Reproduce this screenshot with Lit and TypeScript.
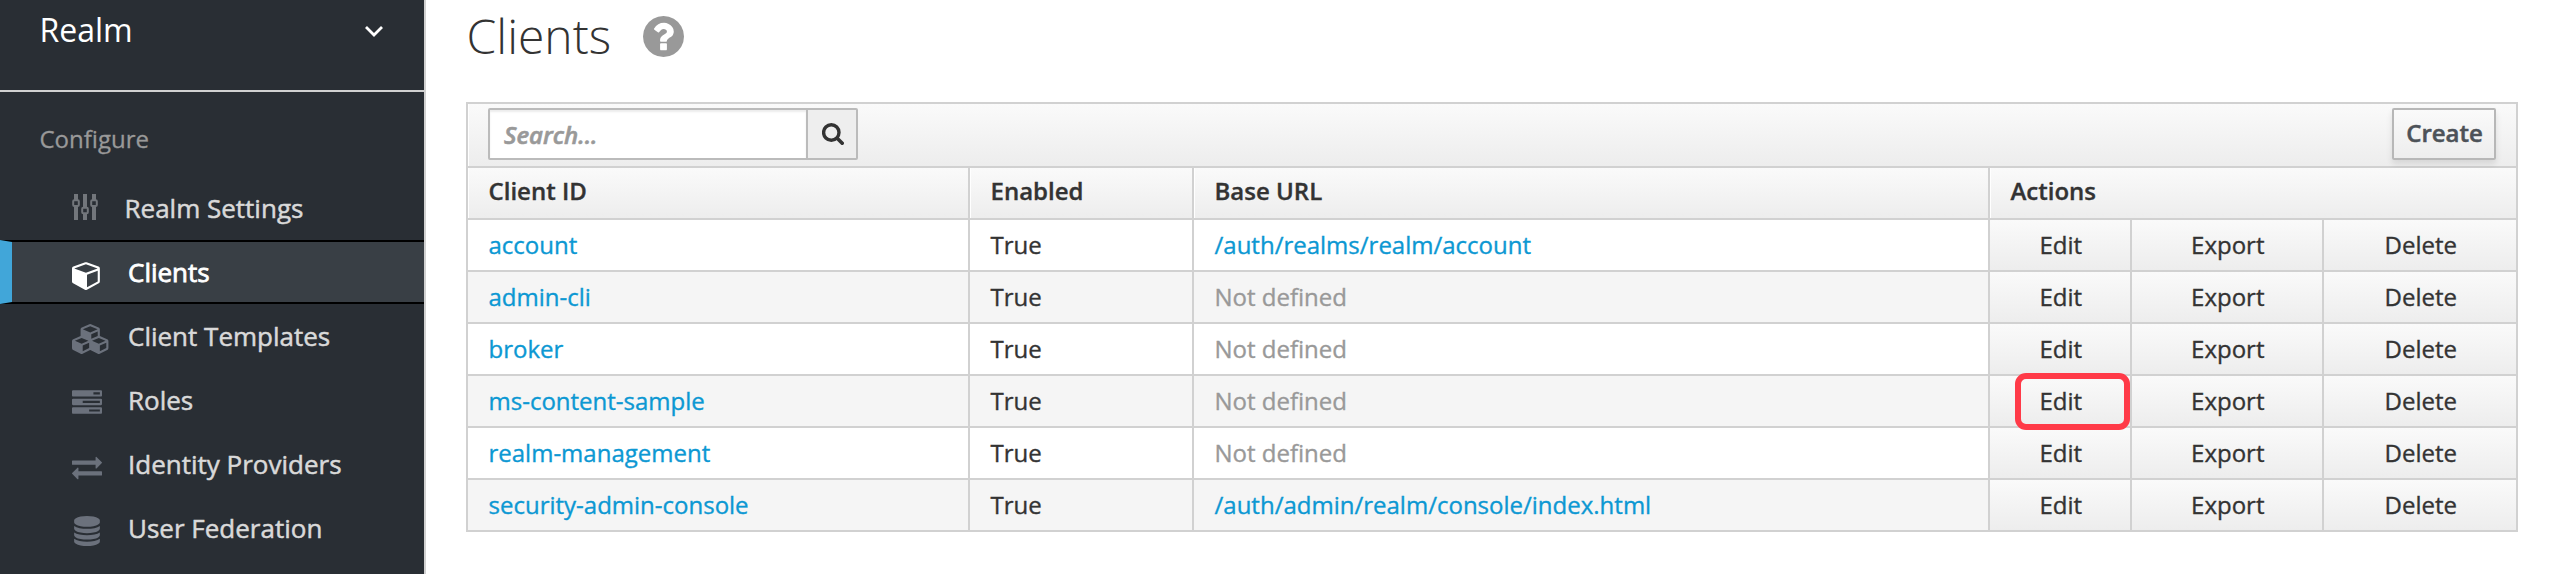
import { LitElement, html, svg, css } from "lit";
import { customElement, property } from "lit/decorators.js";
import { classMap } from "lit/directives/class-map.js";

interface Client { id: string; url?: string; marked?: boolean; }
interface NavItem { label: string; icon: string; active?: boolean; }

const icons: Record<string, unknown> = {
  sliders: svg`<g transform="scale(59.73)" fill="none" stroke="currentColor">
    <path stroke-width="4" d="M4 0V6M4 12V26M13 0V13.500M13 19.500V26M22 0V6M22 12V26"/>
    <path stroke-width="2" d="M1.200 7.300q0-1 1-1h3.600q1 0 1 1v3.600q0 1-1 1h-3.600q-1 0-1-1zM10.200 14.700q0-1 1-1h3.600q1 0 1 1v3.600q0 1-1 1h-3.600q-1 0-1-1zM19.200 7.300q0-1 1-1h3.600q1 0 1 1v3.600q0 1-1 1h-3.600q-1 0-1-1z"/></g>`,
  cube: svg`<path d="M896 1629l640-349v-636l-640 233v752zm-64-865l698-254-698-254-698 254zm832-252v768q0 35-18 65t-49 47l-704 384q-28 16-61 16t-61-16l-704-384q-31-17-49-47t-18-65v-768q0-40 23-73t61-47l704-256q22-8 44-8t44 8l704 256q38 14 61 47t23 73z"/>`,
  cubes: svg`<path d="M640 1632l384-192v-314l-384 164v342zm-64-454l404-173-404-173-404 173zm1088 454l384-192v-314l-384 164v342zm-64-454l404-173-404-173-404 173zm-448-293l384-165v-266l-384 164v267zm-64-379l441-189-441-189-441 189zm1088 518v416q0 36-19 67t-52 47l-448 224q-25 14-57 14t-57-14l-448-224q-4-2-7-4-2 2-7 4l-448 224q-25 14-57 14t-57-14l-448-224q-33-16-52-47t-19-67v-416q0-38 21.500-70t56.500-48l434-186v-400q0-38 21.500-70t56.500-48l448-192q23-10 50-10t50 10l448 192q35 16 56.500 48t21.500 70v400l434 186q36 16 57 48t21 70z"/>`,
  tasks: svg`<path d="M1024 1408h640v-128h-640v128zm-384-512h1024v-128h-1024v128zm640-512h384v-128h-384v128zm512 832v256q0 26-19 45t-45 19h-1664q-26 0-45-19t-19-45v-256q0-26 19-45t45-19h1664q26 0 45 19t19 45zm0-512v256q0 26-19 45t-45 19h-1664q-26 0-45-19t-19-45v-256q0-26 19-45t45-19h1664q26 0 45 19t19 45zm0-512v256q0 26-19 45t-45 19h-1664q-26 0-45-19t-19-45v-256q0-26 19-45t45-19h1664q26 0 45 19t19 45z"/>`,
  exchange: svg`<path d="M1792 1184v192q0 13-9.500 22.500t-22.500 9.500h-1376v192q0 13-9.500 22.500t-22.500 9.500q-12 0-24-10l-319-320q-9-9-9-22 0-14 9-23l320-320q9-9 23-9 13 0 22.500 9.500t9.500 22.500v192h1376q13 0 22.500 9.500t9.500 22.500zm0-544q0 14-9 23l-320 320q-9 9-23 9-13 0-22.500-9.500t-9.500-22.500v-192h-1376q-13 0-22.500-9.500t-9.500-22.500v-192q0-13 9.500-22.500t22.500-9.500h1376v-192q0-14 9-23t23-9q12 0 24 10l319 319q9 9 9 23z"/>`,
  database: svg`<path d="M896 768q237 0 443-43t325-127v170q0 69-103 128t-280 93.500-385 34.500-385-34.500-280-93.500-103-128v-170q119 84 325 127t443 43zm0 768q237 0 443-43t325-127v170q0 69-103 128t-280 93.500-385 34.500-385-34.500-280-93.500-103-128v-170q119 84 325 127t443 43zm0-384q237 0 443-43t325-127v170q0 69-103 128t-280 93.500-385 34.500-385-34.500-280-93.500-103-128v-170q119 84 325 127t443 43zm0-1152q208 0 385 34.500t280 93.500 103 128v128q0 69-103 128t-280 93.500-385 34.500-385-34.500-280-93.500-103-128v-128q0-69 103-128t280-93.500 385-34.500z"/>`,
};

@customElement("side-nav")
class SideNav extends LitElement {
  @property({ attribute: false }) items: NavItem[] = [];

  static styles = css`
    :host { display: flex; flex-direction: column; box-sizing: border-box; width: 426px; height: 574px; flex: none;
      background: #292e34; border-right: 2px solid #d1d1d1; color: #d9d9d9; }
    .realm { box-sizing: border-box; height: 92px; padding: 0 41px 0 39.500px; border-bottom: 2px solid #d1d1d1;
      display: flex; justify-content: space-between; align-items: flex-start; color: #fff; font-size: 32px; line-height: 60px; }
    .chevron { width: 18px; height: 12px; margin-top: 25px; fill: none; stroke: #fff; stroke-width: 2.8; }
    .section { padding: 27px 39.500px 0; height: 57px; line-height: 40px; font-size: 24px; color: #999; -webkit-text-stroke: 0.3px #999; }
    .item { box-sizing: border-box; height: 64px; display: flex; align-items: center; padding-left: 72px; font-size: 26px; }
    .item.active { border: 0 solid #000; border-width: 2px 0 2px 12px; border-left-color: #41a6d9; padding-left: 60px;
      background: #393f45; color: #fff; }
    .icon { width: 30px; height: 30px; margin: 6px 26px 0 0; fill: currentColor; color: #6b717c; overflow: visible; flex: none; }
    .active .icon { color: #fff; }
    .icon.sliders { color: #72767b; margin: 2px 22.500px 0 0; }
    .label { line-height: 40px; -webkit-text-stroke: 0.5px currentColor; }
    .active .label { -webkit-text-stroke-width: 0.8px; }
  `;

  render() {
    return html`
      <div class="realm"><span>Realm</span>
        <svg class="chevron" viewBox="0 0 18 12"><path d="M1 2l8 8 8-8"/></svg></div>
      <div class="section">Configure</div>
      ${this.items.map((i) => html`
        <div class=${classMap({ item: true, active: !!i.active })}>
          <svg class="icon ${i.icon}" viewBox="0 0 1792 1792">${icons[i.icon]}</svg>
          <span class="label">${i.label}</span>
        </div>`)}
    `;
  }
}

@customElement("client-table")
class ClientTable extends LitElement {
  @property({ attribute: false }) clients: Client[] = [];

  static styles = css`
    :host { display: block; box-sizing: border-box; width: 2052px; border: 2px solid #d1d1d1; color: #333; font-size: 24px;
      -webkit-text-stroke: 0.35px currentColor; }
    .toolbar { height: 62px; display: flex; justify-content: space-between; align-items: flex-start; padding: 4px 20px 0;
      box-sizing: border-box; box-shadow: inset 1px 0 #fff; background: linear-gradient(#fafafa, #ededed); }
    .search { display: flex; box-sizing: border-box; width: 370px; height: 52px; border: 2px solid #bbb; border-radius: 2px; background: #fff; }
    .field { flex: 1; padding-left: 14px; line-height: 49px; font-style: italic; font-weight: 600; color: #999;
      box-shadow: inset 0 2px 2px rgba(0,0,0,.075); -webkit-text-stroke: 0.6px #999; }
    .go { width: 48px; border-left: 2px solid #bbb; background: #eee; }
    .go svg { display: block; width: 22px; height: 22px; margin: 13px 0 0 13.500px; fill: none; stroke: #333; }
    .create { box-sizing: border-box; width: 104px; height: 52px; border: 2px solid #b7b7b7; border-radius: 2px; text-align: center;
      padding-left: 1px; line-height: 45px; font-weight: 600; color: #4d5258; background: linear-gradient(#fafafa, #ededed);
      box-shadow: 0 4px 6px rgba(3,3,3,.1); -webkit-text-stroke: 0.5px #4d5258; }
    .row { display: grid; grid-template-columns: 500px 222px 794px 140px 190px 192px; column-gap: 2px; height: 50px;
      border-top: 2px solid #d1d1d1; background: #d1d1d1; line-height: 50px; }
    .cell { background: #fff; padding-left: 20.500px; white-space: nowrap; }
    .row.alt .cell { background: #f5f5f5; }
    .row.head .cell { background: linear-gradient(#fafafa, #ededed); box-shadow: inset 1px 0 #fff; font-weight: 600; line-height: 46px; }
    .row.head .wide { grid-column: span 3; }
    .row .cell.act { background: linear-gradient(#fafafa, #ededed); padding: 0 0 0 1.500px; text-align: center; position: relative; }
    .cell.link { color: #0c98d3; }
    .cell.none { color: #999; }
    .mark { position: absolute; z-index: 1; left: 25px; top: -3px; width: 103px; height: 45px; border: 6px solid #ff3a48; border-radius: 11px; }
  `;

  render() {
    return html`
      <div class="toolbar">
        <div class="search"><div class="field">Search...</div><div class="go">
          <svg viewBox="0 0 22 22"><circle cx="9.300" cy="9.500" r="7.700" stroke-width="3.400"/><path d="M15.200 15.300l5 5" stroke-width="3.600" stroke-linecap="round"/></svg>
        </div></div>
        <div class="create">Create</div>
      </div>
      <div class="row head">
        <div class="cell">Client ID</div><div class="cell">Enabled</div><div class="cell">Base URL</div><div class="cell wide">Actions</div>
      </div>
      ${this.clients.map((c, n) => html`
        <div class=${classMap({ row: true, alt: n % 2 === 1 })}>
          <div class="cell link">${c.id}</div>
          <div class="cell">True</div>
          <div class="cell ${c.url ? "link" : "none"}">${c.url ?? "Not defined"}</div>
          <div class="cell act">Edit${c.marked ? html`<span class="mark"></span>` : ""}</div>
          <div class="cell act">Export</div>
          <div class="cell act">Delete</div>
        </div>`)}
    `;
  }
}

@customElement("app-root")
class AppRoot extends LitElement {
  static styles = css`
    :host { display: flex; height: 574px; overflow: hidden; background: #fff; font-family: "Open Sans", "Noto Sans", sans-serif; }
    .main { padding-left: 40px; }
    .title { height: 102px; display: flex; align-items: flex-start; color: #333; }
    .name { font-size: 48px; font-weight: 300; line-height: 72px; padding-left: 0.5px; }
    .help { width: 41px; height: 41px; margin: 16px 0 0 32px; fill: #999; }
  `;

  private nav: NavItem[] = [
    { label: "Realm Settings", icon: "sliders" },
    { label: "Clients", icon: "cube", active: true },
    { label: "Client Templates", icon: "cubes" },
    { label: "Roles", icon: "tasks" },
    { label: "Identity Providers", icon: "exchange" },
    { label: "User Federation", icon: "database" },
  ];

  private clients: Client[] = [
    { id: "account", url: "/auth/realms/realm/account" },
    { id: "admin-cli" },
    { id: "broker" },
    { id: "ms-content-sample", marked: true },
    { id: "realm-management" },
    { id: "security-admin-console", url: "/auth/admin/realm/console/index.html" },
  ];

  render() {
    return html`
      <side-nav .items=${this.nav}></side-nav>
      <div class="main">
        <div class="title"><span class="name">Clients</span>
          <svg class="help" viewBox="128 128 1536 1536"><path d="M1024 1376v-192q0-14-9-23t-23-9h-192q-14 0-23 9t-9 23v192q0 14 9 23t23 9h192q14 0 23-9t9-23zm256-672q0-88-55.500-163t-138.500-116-170-41q-243 0-371 213-15 24 8 42l132 100q7 6 19 6 16 0 25-12 53-68 86-92 34-24 86-24 48 0 85.500 26t37.500 59q0 38-20 61t-68 45q-63 28-115.500 86.500t-52.500 125.500v36q0 14 9 23t23 9h192q14 0 23-9t9-23q0-19 21.500-49.500t54.500-49.500q32-18 49-28.500t46-35 44.500-48 28-60.500 12.500-81zm384 192q0 209-103 385.500t-279.500 279.500-385.500 103-385.500-103-279.500-279.500-103-385.500 103-385.500 279.500-279.500 385.500-103 385.500 103 279.500 279.500 103 385.500z"/></svg>
        </div>
        <client-table .clients=${this.clients}></client-table>
      </div>
    `;
  }
}
